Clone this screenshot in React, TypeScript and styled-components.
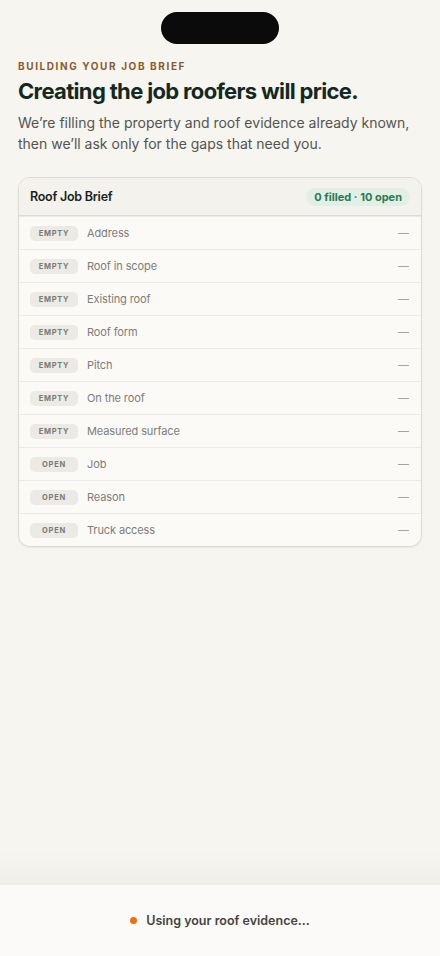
import React from "react";
import styled, { createGlobalStyle } from "styled-components";

const Global = createGlobalStyle`
  * { box-sizing: border-box; }
  html, body { margin: 0; padding: 0; background: #f6f5f0; }
  body { font-family: Inter, "Noto Sans", sans-serif; -webkit-font-smoothing: antialiased; }
`;

const Page = styled.div`
  min-height: 100vh;
  display: flex;
  flex-direction: column;
`;

const Main = styled.main`
  flex: 1;
  display: flex;
  flex-direction: column;
  padding: 12px 18px 0;
`;

const Island = styled.div`
  align-self: center;
  width: 118px;
  height: 32px;
  border-radius: 16px;
  background: #0b0b0b;
`;

const Eyebrow = styled.div`
  margin-top: 16px;
  font-size: 10px;
  line-height: 12px;
  font-weight: 700;
  letter-spacing: 0.16em;
  color: #8d5a2b;
  text-transform: uppercase;
`;

const Title = styled.h1`
  margin: 5px 0 0;
  font-size: 22px;
  line-height: 28px;
  font-weight: 700;
  letter-spacing: -0.03em;
  color: #14281f;
`;

const Lead = styled.p`
  margin: 7px 0 0;
  font-size: 14px;
  line-height: 21px;
  color: #545450;
`;

const Card = styled.section`
  margin-top: 23px;
  border: 1px solid #dcdbd5;
  border-radius: 12px;
  background: #fbfaf7;
  overflow: hidden;
  box-shadow: 0 1px 2px rgba(0, 0, 0, 0.06);
`;

const CardHead = styled.div`
  height: 38px;
  display: flex;
  align-items: center;
  justify-content: space-between;
  padding: 0 11px 0 11px;
  background: #f3f2ec;
  border-bottom: 1px solid #dedcd6;
`;

const CardTitle = styled.div`
  font-size: 12.5px;
  font-weight: 600;
  letter-spacing: -0.02em;
  color: #1a1f1c;
`;

const Count = styled.div`
  height: 18px;
  display: flex;
  align-items: center;
  padding: 0 8px;
  border-radius: 9px;
  background: #e2efe6;
  color: #2a7a4f;
  font-size: 11px;
  font-weight: 700;
`;

const Row = styled.div`
  height: 33px;
  display: flex;
  align-items: center;
  padding: 0 11px;
  border-top: 1px solid #ecebe6;
  &:first-of-type { border-top: none; }
`;

const Badge = styled.span`
  width: 48px;
  height: 15px;
  flex: none;
  display: flex;
  align-items: center;
  justify-content: center;
  border-radius: 5px;
  background: #ebeae4;
  color: #7a7a76;
  font-size: 7.5px;
  font-weight: 700;
  letter-spacing: 0.1em;
`;

const Label = styled.span`
  flex: 1;
  margin-left: 9px;
  font-size: 11px;
  letter-spacing: -0.01em;
  color: #7d7d79;
`;

const Dash = styled.span`
  width: 11px;
  height: 1px;
  background: #a5a5a1;
  margin-right: 1px;
`;

const Footer = styled.footer`
  position: relative;
  margin-top: auto;
  height: 72px;
  display: flex;
  align-items: center;
  justify-content: center;
  gap: 9px;
  background: #fbfaf8;
  border-top: 1px solid #dcdbd6;
  &::before {
    content: "";
    position: absolute;
    left: 0;
    right: 0;
    bottom: 100%;
    height: 34px;
    background: linear-gradient(to bottom, rgba(239, 238, 233, 0), #efeee9);
    pointer-events: none;
  }
`;

const Dot = styled.span`
  width: 7px;
  height: 7px;
  border-radius: 50%;
  background: #f0700f;
`;

const Status = styled.span`
  font-size: 12.5px;
  font-weight: 600;
  color: #45443f;
`;

const fields: { state: "EMPTY" | "OPEN"; label: string }[] = [
  { state: "EMPTY", label: "Address" },
  { state: "EMPTY", label: "Roof in scope" },
  { state: "EMPTY", label: "Existing roof" },
  { state: "EMPTY", label: "Roof form" },
  { state: "EMPTY", label: "Pitch" },
  { state: "EMPTY", label: "On the roof" },
  { state: "EMPTY", label: "Measured surface" },
  { state: "OPEN", label: "Job" },
  { state: "OPEN", label: "Reason" },
  { state: "OPEN", label: "Truck access" },
];

export default function App() {
  return (
    <Page>
      <Global />
      <Main>
        <Island />
        <Eyebrow>Building your job brief</Eyebrow>
        <Title>Creating the job roofers will price.</Title>
        <Lead>
          We’re filling the property and roof evidence already known, then we’ll ask only for the gaps that need you.
        </Lead>
        <Card>
          <CardHead>
            <CardTitle>Roof Job Brief</CardTitle>
            <Count>0 filled · 10 open</Count>
          </CardHead>
          {fields.map((f) => (
            <Row key={f.label}>
              <Badge>{f.state}</Badge>
              <Label>{f.label}</Label>
              <Dash />
            </Row>
          ))}
        </Card>
      </Main>
      <Footer>
        <Dot />
        <Status>Using your roof evidence…</Status>
      </Footer>
    </Page>
  );
}
